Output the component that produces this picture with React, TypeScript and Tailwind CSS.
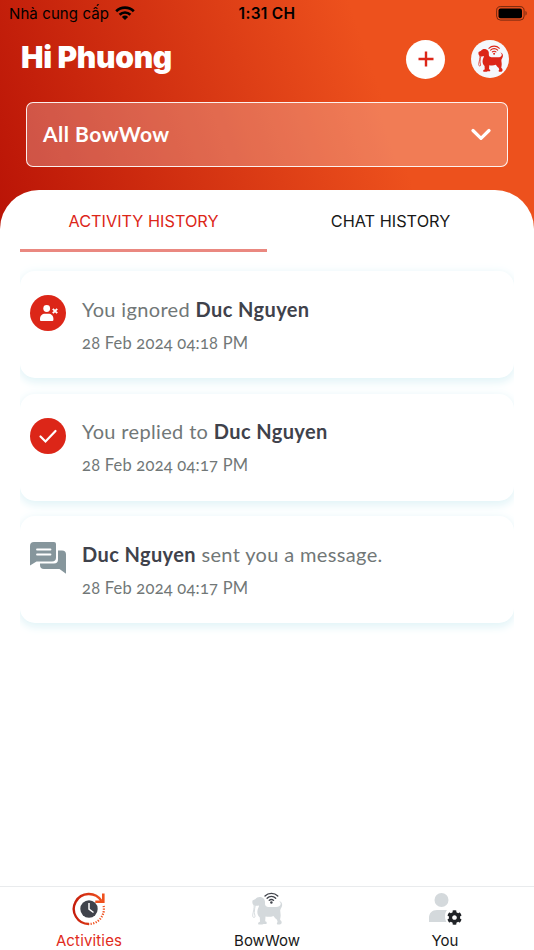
import type { ReactNode } from "react";
import { FaCog } from "react-icons/fa";

const tabs = [
  { label: "ACTIVITY HISTORY", active: true },
  { label: "CHAT HISTORY", active: false },
];

function WifiMark({ className }: { className?: string }) {
  return (
    <svg viewBox="0 0 20 14" className={className} fill="none" stroke="currentColor" strokeWidth="2.7">
      <path d="M1.2 5.2a12.6 12.6 0 0 1 17.6 0" />
      <path d="M4.6 8.7a7.7 7.7 0 0 1 10.8 0" />
      <path d="M10 14 6.9 10.9a4.4 4.4 0 0 1 6.2 0z" fill="currentColor" stroke="none" />
    </svg>
  );
}

function DogIcon({ className, wifi }: { className?: string; wifi: string }) {
  return (
    <svg viewBox="0 0 32 34" className={className}>
      <path
        fill="currentColor"
        d="M1.500 8.500 4.500 7C5.500 5.300 8 4.600 10.500 5.200 13 5.900 14.300 8 14 11c-.2 2 .5 3.700 3 3.900l8 .1c2.500 0 4.500-1 4.700-3 .1-1.300-.7-2.200-1.900-3 2.700.5 3.800 2.500 3.200 5-.4 1.800-1.700 3-1.800 4.500 0 2 .6 3.500.4 5.500-.1 2-.6 3-.4 4 1.300 1 1.800 2 1.300 3.200-.7 1.400-2.500 1.600-4 1.200-1.100-.4-.7-1.600.1-2.400L26 27.800c-1.500-1-2.700-2.300-3.500-3.800-2.500 1-5.500 1-8 .5l-.3 4.800c1.500.3 1.900 1.500 1.200 2.600h-2.900c-.8.7-3 .7-5 .5-.9-1.200-.2-2.200 1.500-2.600l-.2-4.300c-2.100-2-2.800-4.500-2.300-7 .3-2 1.500-3.500 1.500-5-2 .5-4.500.5-5.700-.7-1-1-1.100-3-.8-4.300z"
      />
      <path
        d="M3 12.500c.6 3.800-.8 7-1.300 10.400-.2 2 .9 3.300 2 2.300.9-1.200-.4-2.500-.4-4.800 0-2.400.6-4.900 1-7.300"
        fill="none"
        stroke="currentColor"
        strokeWidth=".9"
      />
      <g fill="none" stroke={wifi} strokeWidth="1.300" strokeLinecap="round">
        <path d="M14 4a9 9 0 0 1 12.800 0" />
        <path d="M16.100 6.200a6 6 0 0 1 8.600 0" />
        <path d="M18.200 8.400a3.100 3.100 0 0 1 4.400 0" />
        <circle cx="20.400" cy="10.500" r="1.200" fill={wifi} stroke="none" />
      </g>
    </svg>
  );
}

function IgnoredIcon() {
  return (
    <svg viewBox="0 0 36 36" className="size-9">
      <circle cx="18" cy="18" r="18" fill="#dc2618" />
      <g fill="#fff">
        <circle cx="16.700" cy="13.500" r="3.400" />
        <path d="M10 25v-1.200c0-3 2.200-5 5-5h3.400c2.800 0 5 2 5 5V25a1 1 0 0 1-1 1H11a1 1 0 0 1-1-1z" />
      </g>
      <path d="m22.800 13.800 4.400 4.400m0-4.400-4.400 4.400" stroke="#fff" strokeWidth="1.900" />
    </svg>
  );
}

function RepliedIcon() {
  return (
    <svg viewBox="0 0 36 36" className="size-9" fill="none">
      <circle cx="18" cy="18" r="18" fill="#dc2618" />
      <path d="m10.500 18.500 5 5L25.500 13" stroke="#fff" strokeWidth="2.200" strokeLinecap="round" />
    </svg>
  );
}

function MessageIcon() {
  return (
    <svg viewBox="0 0 36 36" className="size-9" fill="#86969c">
      <path d="M4 2h20a2 2 0 0 1 2 2v13.500a4 4 0 0 1-4 4H6.500L0 25.500V6a4 4 0 0 1 4-4z" />
      <path d="M28 10.500h4a4 4 0 0 1 4 4v19.300L29.500 29H14a4 4 0 0 1-4-4v-1.500h14a4 4 0 0 0 4-4z" />
      <path d="M7 9.500h13.500M7 14.500h13.500" stroke="#fff" strokeWidth="1.800" strokeLinecap="round" />
    </svg>
  );
}

function ActivitiesIcon() {
  return (
    <svg viewBox="0 0 34 34" className="h-[34px] w-[34px]" fill="none">
      <defs>
        <linearGradient id="ring" x1="0" x2="1">
          <stop stopColor="#c51d0c" />
          <stop offset="1" stopColor="#ef511e" />
        </linearGradient>
      </defs>
      <path d="M17 32A15 15 0 1 1 29.500 9" stroke="url(#ring)" strokeWidth="2.400" />
      <path d="M31.600 14a15 15 0 0 1-14.600 18" stroke="#ef511e" strokeWidth="2.200" strokeDasharray="1.200 1.400" />
      <path d="M31.300 1.500v8.300h-8" stroke="#ef511e" strokeWidth="2.600" />
      <circle cx="17" cy="17" r="8.700" fill="#40434b" />
      <path d="M17 11v6.200l4.500 3.300" stroke="#fff" strokeWidth="1.500" />
    </svg>
  );
}

function YouIcon() {
  return (
    <div className="relative h-[34px] w-8">
      <svg viewBox="0 0 32 34" className="h-[34px] w-8" fill="#d4d9dc">
        <circle cx="12.500" cy="8" r="7" />
        <path d="M0 30v-4c0-5 3-8 8-8h10c-1.500 2-2 4-2 6.500 0 2.200.5 4 1.500 5.500z" />
      </svg>
      <FaCog className="absolute top-[18px] left-[18px] size-[15px] text-[#202327]" />
    </div>
  );
}

type Activity = { icon: ReactNode; text: ReactNode; time: string };

const name = <b className="font-bold tracking-[0.4px] text-[#3f424b]">Duc Nguyen</b>;

const activities: Activity[] = [
  { icon: <IgnoredIcon />, text: <>You ignored {name}</>, time: "28 Feb 2024 04:18 PM" },
  { icon: <RepliedIcon />, text: <>You replied to {name}</>, time: "28 Feb 2024 04:17 PM" },
  { icon: <MessageIcon />, text: <>{name} sent you a message.</>, time: "28 Feb 2024 04:17 PM" },
];

const navItems = [
  { label: "Activities", icon: <ActivitiesIcon />, active: true },
  { label: "BowWow", icon: <DogIcon className="h-[34px] w-8 text-[#d4d9dc]" wifi="#40434b" />, active: false },
  { label: "You", icon: <YouIcon />, active: false },
];

export default function App() {
  return (
    <div className="flex h-[950px] w-[534px] flex-col overflow-hidden bg-white font-['Inter',sans-serif]">
      <header className="h-[240px] shrink-0 bg-[linear-gradient(71deg,#b91306_0%,#ed511d_70%)]">
        {/* Status bar */}
        <div className="grid h-7 grid-cols-3 items-center pr-[6px] pl-[9px] text-[15px] text-black">
          <div className="flex items-center gap-[6px] whitespace-nowrap">
            <span className="tracking-[0.1px]">Nhà cung cấp</span>
            <WifiMark className="-mt-[2px] h-[14px] w-5" />
          </div>
          <span className="pr-[3px] text-center text-[15.5px] font-semibold tracking-[0.3px]">1:31 CH</span>
          <svg viewBox="0 0 32 15" className="-mt-[2px] h-[15px] w-8 justify-self-end" fill="none">
            <rect x=".6" y=".6" width="27.500" height="13.500" rx="4" stroke="#000" strokeOpacity=".5" />
            <rect x="2.500" y="2.500" width="23.500" height="9.700" rx="2" fill="#000" />
            <path d="M29.500 5v4.500c1.500-.5 1.500-4 0-4.500z" fill="#000" fillOpacity=".5" />
          </svg>
        </div>

        <div className="flex h-[62px] items-center justify-between pr-[25px] pl-[21px]">
          <h1 className="-mt-1 text-[30px] font-black tracking-[-0.3px] text-white">Hi Phuong</h1>
          <div className="flex gap-[26px]">
            <button className="flex size-[39px] items-center justify-center rounded-full bg-white">
              <svg viewBox="0 0 16 16" className="size-4" stroke="#dc2618" strokeWidth="2.400">
                <path d="M8 .5v15M.5 8h15" />
              </svg>
            </button>
            <div className="flex size-[38px] items-center justify-center rounded-full bg-[#f5f8fc]">
              <DogIcon className="h-7 w-[27px] text-[#dc2618]" wifi="#dc2618" />
            </div>
          </div>
        </div>

        <button className="mx-[26px] mt-3 flex h-[65px] w-[482px] items-center justify-between rounded-[7px] border border-white/90 bg-white/25 px-4 text-white">
          <span className="-mt-[2px] font-['Lato',sans-serif] text-[21px] font-bold tracking-[0.5px]">All BowWow</span>
          <svg viewBox="0 0 20 13" className="h-[13px] w-5" fill="none" stroke="currentColor">
            <path d="m2 2.500 8 7.800 8-7.800" strokeWidth="3.200" strokeLinecap="round" strokeLinejoin="round" />
          </svg>
        </button>
      </header>

      <main className="relative -mt-[50px] flex flex-1 flex-col rounded-t-[39px] bg-white px-5">
        <div className="grid h-[62px] grid-cols-2">
          {tabs.map((tab) => (
            <button
              key={tab.label}
              className={
                tab.active
                  ? "border-b-[3px] border-[#ea8880] pt-1 text-[16.3px] text-[#dc2618]"
                  : "border-b-[3px] border-transparent pt-1 text-[16.3px] text-[#181818]"
              }
            >
              {tab.label}
            </button>
          ))}
        </div>

        <div className="flex flex-1 flex-col gap-[15.5px] overflow-hidden pt-[19px]">
          {activities.map((item, i) => (
            <article
              key={i}
              className="flex h-[107px] shrink-0 gap-4 rounded-[15px] bg-white px-[10px] pt-6 shadow-[0_4px_10px_#e2f4f7,0_0_12px_#f3fafc]"
            >
              {item.icon}
              <div className="-mt-[1.5px] font-['Lato',sans-serif] text-[#717777]">
                <p className="text-[20px] leading-[30px] tracking-[0.35px]">{item.text}</p>
                <p className="mt-[5px] text-[16.5px] leading-7 tracking-[0.22px] oldstyle-nums">{item.time}</p>
              </div>
            </article>
          ))}
        </div>
      </main>

      <nav className="grid h-16 shrink-0 grid-cols-3 border-t border-[#e9ebed] bg-white">
        {navItems.map((item) => (
          <a key={item.label} className="flex flex-col items-center pt-[5px]">
            {item.icon}
            <span
              className={
                item.active
                  ? "mt-[5px] text-[15px] leading-5 tracking-[0.15px] text-[#e12b20]"
                  : "mt-[5px] text-[15px] leading-5 text-[#181818]"
              }
            >
              {item.label}
            </span>
          </a>
        ))}
      </nav>
    </div>
  );
}
